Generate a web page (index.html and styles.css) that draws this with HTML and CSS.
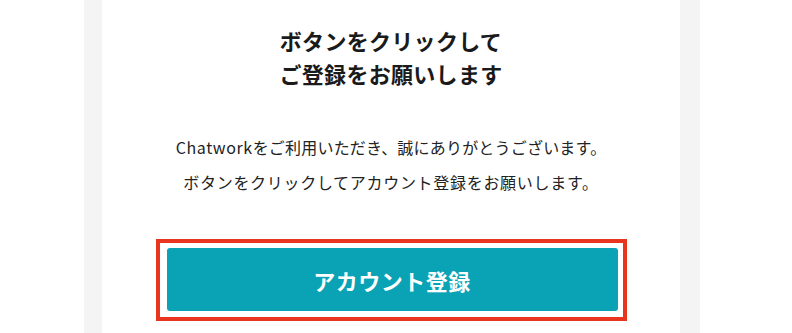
FILE: index.html
```html
<!DOCTYPE html>
<html lang="ja">
<head>
<meta charset="utf-8">
<link rel="stylesheet" href="styles.css">
</head>
<body>
<div class="outer">
  <div class="card">
    <h1 class="title">ボタンをクリックして<br>ご登録をお願いします</h1>
    <div class="body">
      <p class="line"><span class="latin">Chatwork</span>をご利用いただき、誠にありがとうございます。</p>
      <p class="line line-wide">ボタンをクリックしてアカウント登録をお願いします。</p>
    </div>
    <div class="highlight">
      <a class="btn">アカウント登録</a>
    </div>
  </div>
</div>
</body>
</html>
```
FILE: styles.css
```css
html, body {
  margin: 0;
  padding: 0;
  background: #ffffff;
}
body {
  width: 792px;
  height: 333px;
  overflow: hidden;
  font-family: "Noto Sans CJK JP", "Noto Sans", sans-serif;
}
.outer {
  margin-left: 84px;
  width: 616px;
  height: 333px;
  box-sizing: border-box;
  padding: 0 20px 0 18px;
  background: #f4f4f4;
}
.card {
  background: #ffffff;
  height: 100%;
  padding-top: 24px;
  box-sizing: border-box;
  display: flex;
  flex-direction: column;
  align-items: center;
}
.title {
  margin: 0;
  font-size: 22px;
  line-height: 33px;
  font-weight: 700;
  color: #1a1a1a;
  text-align: center;
  letter-spacing: 0.3px;
}
.body {
  margin-top: 40px;
  text-align: center;
}
.line {
  margin: 0;
  font-size: 16px;
  line-height: 35px;
  color: #222222;
  letter-spacing: 0.2px;
}
.line-wide {
  letter-spacing: 0.7px;
}
.latin {
  letter-spacing: 0.6px;
}
.highlight {
  margin-top: 39px;
  width: 471px;
  height: 82px;
  box-sizing: border-box;
  border: 4px solid #e8351f;
  padding: 5px 5px 6px 7px;
  background: #ffffff;
}
.btn {
  display: flex;
  align-items: center;
  justify-content: center;
  height: 100%;
  border-radius: 3px;
  background: #0aa2b5;
  color: #ffffff;
  font-size: 22px;
  font-weight: 700;
  letter-spacing: 0.5px;
}
```
